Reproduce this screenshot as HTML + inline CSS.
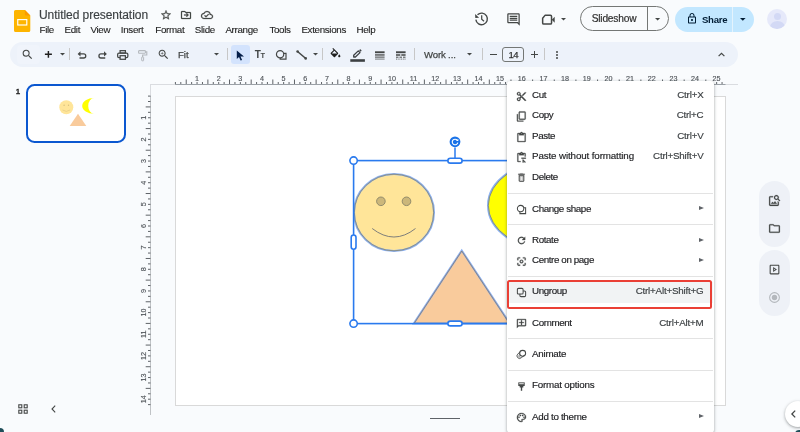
<!DOCTYPE html>
<html><head><meta charset="utf-8"><title>Untitled presentation</title>
<style>
html,body{margin:0;padding:0}
body{width:800px;height:432px;overflow:hidden;will-change:transform;background:#f9fbfd;position:relative;font-family:"Liberation Sans",sans-serif;color:#1f1f1f}
.a{position:absolute}
.t{position:absolute;white-space:nowrap;line-height:1}
svg{position:absolute;overflow:visible}
#title{left:39px;top:8.800px;font-size:12px;letter-spacing:-0.050px;color:#3c4043;-webkit-text-stroke:0.150px #3c4043}
.m{font-size:9.800px;top:25.300px;letter-spacing:-0.330px;color:#1f1f1f;-webkit-text-stroke:0.120px #1f1f1f}
#tb{left:10px;top:41.500px;width:728px;height:25.200px;border-radius:12.600px;background:#edf2fa}
.sep{position:absolute;width:1px;background:#c7c7c7;top:48px;height:12px}
.tbt{font-size:9.600px;top:50.200px;color:#444746;letter-spacing:0;-webkit-text-stroke:0.250px #444746}
#menu{left:507px;top:81px;width:206.500px;height:352px;background:#fff;border-radius:3.500px;box-shadow:0 1px 3px 1px rgba(60,64,67,.18),0 1px 2px rgba(60,64,67,.3)}
.mi{position:absolute;left:24px;font-size:9.800px;color:#202124;white-space:nowrap;line-height:1;letter-spacing:-0.400px;-webkit-text-stroke:0.150px #202124}
.mk{position:absolute;right:9.500px;font-size:9.800px;color:#3c4043;-webkit-text-stroke:0.150px #3c4043;white-space:nowrap;line-height:1;letter-spacing:-0.200px}
.ms{position:absolute;left:0;right:0;height:1px;background:#e3e3e3}
.arr{position:absolute;right:9.300px;width:0;height:0;border-left:5px solid #5f6368;border-top:2.800px solid transparent;border-bottom:2.800px solid transparent}
.rt text{font-size:7.200px;fill:#50555a;stroke:#50555a;stroke-width:0.150px;font-family:"Liberation Sans",sans-serif}
</style></head><body>
<!-- header -->
<svg style="left:13.600px;top:10px" width="16.300" height="22" viewBox="0 0 16.300 22"><path d="M1.600 0h9.300L16.300 5.400v15a1.600 1.600 0 0 1-1.600 1.600H1.600A1.600 1.600 0 0 1 0 20.400V1.600A1.600 1.600 0 0 1 1.600 0z" fill="#fdb400"/><path d="M10.900 0L16.300 5.400h-4.200a1.200 1.200 0 0 1-1.200-1.200z" fill="#fb9a00"/><rect x="3.750" y="9.600" width="9.050" height="5.400" fill="none" stroke="#fff" stroke-width="1.150"/></svg>
<div class="t" id="title">Untitled presentation</div>
<div class="t m" style="left:39.500px">File</div>
<div class="t m" style="left:64.500px">Edit</div>
<div class="t m" style="left:90.500px">View</div>
<div class="t m" style="left:120.800px">Insert</div>
<div class="t m" style="left:155.300px">Format</div>
<div class="t m" style="left:194.800px">Slide</div>
<div class="t m" style="left:225.400px">Arrange</div>
<div class="t m" style="left:269.400px">Tools</div>
<div class="t m" style="left:301.400px">Extensions</div>
<div class="t m" style="left:356.500px">Help</div>
<!-- title icons: star, move, cloud -->
<svg style="left:159.600px;top:9.100px" width="12" height="12" viewBox="0 0 24 24" stroke="#444746" stroke-width="0.500"><path d="M22 9.240l-7.190-.62L12 2 9.190 8.630 2 9.240l5.460 4.730L5.820 21 12 17.270 18.180 21l-1.630-7.030L22 9.240zM12 15.400l-3.760 2.270 1-4.280-3.320-2.880 4.380-.38L12 6.100l1.710 4.040 4.380.38-3.320 2.880 1 4.280L12 15.400z" fill="#444746"/></svg>
<svg style="left:180px;top:9px" width="12" height="12" viewBox="0 0 24 24" stroke="#444746" stroke-width="0.500"><path d="M20 6h-8l-2-2H4c-1.100 0-2 .9-2 2v12c0 1.100.9 2 2 2h16c1.100 0 2-.9 2-2V8c0-1.100-.9-2-2-2zm0 12H4V6h5.170l2 2H20v10zm-7.840-3.590L13.570 16l4-4-4-4-1.410 1.410L13.740 11H8v2h5.740l-1.580 1.410z" fill="#444746"/></svg>
<svg style="left:200.600px;top:9px" width="12" height="12" viewBox="0 0 24 24" stroke="#444746" stroke-width="0.500"><path d="M19.350 10.040A7.490 7.490 0 0 0 12 4C9.110 4 6.600 5.640 5.350 8.040A5.994 5.994 0 0 0 0 14c0 3.310 2.690 6 6 6h13c2.760 0 5-2.240 5-5 0-2.640-2.050-4.780-4.650-4.960zM19 18H6c-2.210 0-4-1.790-4-4s1.790-4 4-4h.71C7.370 7.690 9.480 6 12 6c3.040 0 5.500 2.460 5.500 5.500v.5H19c1.660 0 3 1.340 3 3s-1.340 3-3 3zm-9-3.820l-2.090-2.090L6.500 13.500 10 17l6.010-6.010-1.410-1.410z" fill="#444746"/></svg>
<!-- right header -->
<svg style="left:0;top:0" width="800" height="40" viewBox="0 0 800 40"><path d="M477.500 14.800A5.800 5.800 0 1 1 475.850 19.600" fill="none" stroke="#444746" stroke-width="1.350"/><path d="M475.100 14.100L475.300 18.100L479.100 17.700Z" fill="#444746"/><path d="M481.700 15.300V19.300L484 21.300" fill="none" stroke="#444746" stroke-width="1.250"/></svg>
<svg style="left:506px;top:12px" width="15" height="15" viewBox="0 0 24 24"><path d="M21.990 4c0-1.100-.89-2-1.990-2H4c-1.100 0-2 .9-2 2v12c0 1.100.9 2 2 2h14l4 4-.01-18zM20 4v13.170L18.830 16H4V4h16zM6 12h12v2H6zm0-3h12v2H6zm0-3h12v2H6z" fill="#444746"/></svg>
<svg style="left:0;top:0" width="800" height="40" viewBox="0 0 800 40"><path d="M545 15.350H550.450A1.100 1.100 0 0 1 551.550 16.450V22.950A1.100 1.100 0 0 1 550.450 24.050H543.750A1.100 1.100 0 0 1 542.650 22.950V18.300Z" fill="none" stroke="#444746" stroke-width="1.500" stroke-linejoin="round"/><path d="M551.800 19.700L554.700 16.700V22.800Z" fill="#444746"/></svg>
<svg style="left:561px;top:17.900px" width="5" height="2.600" viewBox="0 0 10 5"><path d="M0 0l5 5 5-5z" fill="#444746"/></svg>
<div class="a" style="left:580.400px;top:6.400px;width:87px;height:23px;border:1px solid #747775;border-radius:13px"></div>
<div class="a" style="left:646.500px;top:7px;width:1px;height:24px;background:#747775"></div>
<div class="t" style="left:591.700px;top:14.100px;font-size:10.200px;letter-spacing:-0.200px;color:#303030;-webkit-text-stroke:0.200px #303030">Slideshow</div>
<svg style="left:654.700px;top:17.600px" width="5.200" height="2.600" viewBox="0 0 10 5"><path d="M0 0l5 5 5-5z" fill="#444746"/></svg>
<div class="a" style="left:674.500px;top:6.500px;width:79.500px;height:25.500px;border-radius:13px;background:#c2e7ff"></div>
<div class="a" style="left:732px;top:6.500px;width:1px;height:25.500px;background:#e4f3fd"></div>
<svg style="left:685.500px;top:12px" width="12" height="13" viewBox="0 0 24 24"><path d="M18 8h-1V6c0-2.760-2.240-5-5-5S7 3.240 7 6v2H6c-1.100 0-2 .9-2 2v10c0 1.100.9 2 2 2h12c1.100 0 2-.9 2-2V10c0-1.100-.9-2-2-2zM9 6c0-1.660 1.340-3 3-3s3 1.340 3 3v2H9V6zm9 14H6V10h12v10zm-6-3c1.100 0 2-.9 2-2s-.9-2-2-2-2 .9-2 2 .9 2 2 2z" fill="#001d35"/></svg>
<div class="t" style="left:702px;top:14.800px;font-size:9.600px;font-weight:bold;letter-spacing:-0.300px;color:#001d35">Share</div>
<svg style="left:740.200px;top:17.700px" width="5.600" height="2.800" viewBox="0 0 10 5"><path d="M0 0l5 5 5-5z" fill="#001d35"/></svg>
<div class="a" style="left:767px;top:9px;width:20px;height:20px;border-radius:10px;background:#e6e9fa;overflow:hidden"><div class="a" style="left:6.500px;top:3.500px;width:7px;height:7px;border-radius:50%;background:#d3d9f5"></div><div class="a" style="left:2.500px;top:12px;width:15px;height:12px;border-radius:50%;background:#d3d9f5"></div></div>
<!-- toolbar -->
<div class="a" id="tb"></div>
<div class="a" style="left:16.500px;top:45px;width:23.200px;height:18.500px;border-radius:4px;background:#f0f4fb"></div>
<div class="a" style="left:230.500px;top:45px;width:19px;height:19px;border-radius:3px;background:#d3e3fd"></div>
<div class="sep" style="left:69px"></div>
<div class="sep" style="left:227px"></div>
<div class="sep" style="left:322px"></div>
<div class="sep" style="left:414px"></div>
<div class="sep" style="left:482px"></div>
<div class="sep" style="left:544px"></div>
<!-- search -->
<svg style="left:21px;top:47.500px" width="13" height="13" viewBox="0 0 24 24"><path d="M15.500 14h-.79l-.28-.27A6.471 6.471 0 0 0 16 9.500 6.500 6.500 0 1 0 9.500 16c1.610 0 3.090-.59 4.230-1.570l.27.28v.79l5 4.990L20.490 19l-4.990-5zm-6 0C7.010 14 5 11.990 5 9.500S7.010 5 9.500 5 14 7.010 14 9.500 11.990 14 9.500 14z" fill="#444746"/></svg>
<!-- plus -->
<svg style="left:44px;top:50px" width="9" height="9" viewBox="0 0 9 9"><path d="M0.900 4.300H7.900M4.400 0.900V7.700" fill="none" stroke="#1f1f1f" stroke-width="1.450"/></svg>
<svg style="left:60.1px;top:53.300px" width="5" height="2.600" viewBox="0 0 10 5"><path d="M0 0l5 5 5-5z" fill="#444746"/></svg>
<!-- undo -->
<svg style="left:77px;top:51px" width="10" height="9" viewBox="0 0 10 9"><path d="M2 2.900H6.700A2.050 2.050 0 0 1 6.700 7H2.500" fill="none" stroke="#444746" stroke-width="1.300"/><path d="M0.600 2.900L3.500 0.300V5.500Z" fill="#444746"/></svg>
<!-- redo -->
<svg style="left:97.500px;top:51px" width="10" height="9" viewBox="0 0 10 9"><path d="M7.500 2.900H3A2.050 2.050 0 0 0 3 7H7.250" fill="none" stroke="#444746" stroke-width="1.300"/><path d="M8.900 2.900L6 0.300V5.500Z" fill="#444746"/></svg>
<!-- print -->
<svg style="left:117px;top:49.500px" width="11.500" height="10" viewBox="0 0 11.500 10"><rect x="0.650" y="3.100" width="10.200" height="4.400" rx="1.300" fill="none" stroke="#444746" stroke-width="1.250"/><rect x="3.100" y="0.650" width="5.300" height="2.400" fill="none" stroke="#444746" stroke-width="1.250"/><rect x="3.100" y="5.700" width="5.300" height="3.600" fill="#edf2fa" stroke="#444746" stroke-width="1.250"/></svg>
<!-- paint format (disabled) -->
<svg style="left:138px;top:49.500px" width="9.500" height="11.500" viewBox="0 0 9.500 11.500"><rect x="0.600" y="0.600" width="6.800" height="2.600" rx="0.600" fill="none" stroke="#b4b8bd" stroke-width="1.100"/><path d="M7.400 1.900H8.800V5H4.600V7" fill="none" stroke="#b4b8bd" stroke-width="1.100"/><rect x="3.700" y="7" width="1.900" height="3.800" rx="0.400" fill="none" stroke="#b4b8bd" stroke-width="1"/></svg>
<!-- zoom -->
<svg style="left:157px;top:48px" width="13" height="13" viewBox="0 0 24 24"><path d="M15.500 14h-.79l-.28-.27C15.410 12.590 16 11.110 16 9.500 16 5.910 13.090 3 9.500 3S3 5.910 3 9.500 5.910 16 9.500 16c1.610 0 3.090-.59 4.230-1.570l.27.28v.79l5 4.990L20.490 19l-4.990-5zm-6 0C7.010 14 5 11.990 5 9.500S7.010 5 9.500 5 14 7.010 14 9.500 11.990 14 9.500 14zm2.500-4h-2v2H9v-2H7V9h2V7h1v2h2v1z" fill="#444746"/></svg>
<div class="t tbt" style="left:178px">Fit</div>
<svg style="left:213.6px;top:53.300px" width="5" height="2.600" viewBox="0 0 10 5"><path d="M0 0l5 5 5-5z" fill="#444746"/></svg>
<!-- cursor -->
<svg style="left:235.500px;top:49.500px" width="9" height="11" viewBox="0 0 9 11"><path d="M0.800 0.400L8 6.500H4.500L6.100 9.900L4.600 10.600L3 7.100L0.800 9Z" fill="#041e49"/></svg>
<!-- Tt -->
<div class="t" style="left:254.800px;top:50.400px;font-size:10px;font-weight:bold;color:#444746;letter-spacing:-0.500px">T<span style="font-size:7.500px">T</span></div>
<!-- shape -->
<svg style="left:275px;top:48.500px" width="12" height="11.500" viewBox="0 0 12 11.500"><path d="M8.800 4.300H11V10.200H5.200V8.700" fill="none" stroke="#444746" stroke-width="1.200"/><circle cx="5.100" cy="5.200" r="3.650" fill="#edf2fa" stroke="#444746" stroke-width="1.200"/></svg>
<!-- line -->
<svg style="left:296px;top:49.500px" width="11" height="10" viewBox="0 0 11 10"><path d="M1.500 1.500L9.800 8.500" stroke="#444746" stroke-width="1.500" fill="none"/><circle cx="1.600" cy="1.500" r="1.300" fill="#444746"/><circle cx="9.700" cy="8.400" r="1.300" fill="#444746"/></svg>
<svg style="left:313.1px;top:53.300px" width="5" height="2.600" viewBox="0 0 10 5"><path d="M0 0l5 5 5-5z" fill="#444746"/></svg>
<!-- fill -->
<svg style="left:329px;top:47.500px" width="13" height="13" viewBox="0 0 24 24"><path d="M16.560 8.940L7.620 0 6.210 1.410l2.380 2.380-5.150 5.150a1.490 1.490 0 0 0 0 2.120l5.500 5.500c.29.290.68.440 1.060.440s.77-.15 1.060-.44l5.500-5.500c.59-.58.590-1.530 0-2.120zM5.210 10L10 5.210 14.790 10H5.210zM19 11.500s-2 2.170-2 3.500c0 1.100.9 2 2 2s2-.9 2-2c0-1.330-2-3.500-2-3.500z" fill="#1f1f1f"/></svg>
<!-- pen -->
<svg style="left:350px;top:49px" width="15.500" height="13" viewBox="0 0 15.500 13"><path d="M3.700 8V6.300L8.300 1.900L10 3.600L5.400 8Z" fill="none" stroke="#3c4043" stroke-width="1.300" stroke-linejoin="round"/><path d="M9.100 1.300L9.900 0.500Q10.300 0.200 10.700 0.500L11.400 1.200Q11.700 1.600 11.400 2L10.600 2.800Z" fill="#3c4043"/><rect x="0.300" y="10.200" width="14.600" height="2.600" fill="#3c4043"/></svg>
<!-- line weight -->
<svg style="left:374.500px;top:50.500px" width="10" height="9" viewBox="0 0 10 9"><rect x="0" y="0.300" width="9.600" height="1.900" fill="#444746"/><rect x="0" y="3.300" width="9.600" height="1.300" fill="#444746"/><rect x="0" y="5.600" width="9.600" height="1" fill="#444746"/><rect x="0" y="7.700" width="9.600" height="0.700" fill="#444746"/></svg>
<!-- line dash -->
<svg style="left:396px;top:50.500px" width="10" height="9" viewBox="0 0 10 9"><rect x="0" y="0.300" width="9.600" height="1.900" fill="#444746"/><path d="M0 4h9.600" stroke="#444746" stroke-width="1.300" stroke-dasharray="4.300 1" fill="none"/><path d="M0 6.200h9.600" stroke="#444746" stroke-width="1" stroke-dasharray="2.500 1" fill="none"/><path d="M0 8.100h9.600" stroke="#444746" stroke-width="0.800" stroke-dasharray="1 0.700" fill="none"/></svg>
<div class="t tbt" style="left:424px;letter-spacing:-0.150px">Work ...</div>
<svg style="left:466.6px;top:53.300px" width="5" height="2.600" viewBox="0 0 10 5"><path d="M0 0l5 5 5-5z" fill="#444746"/></svg>
<!-- minus / size / plus -->
<div class="a" style="left:490.300px;top:53.600px;width:6.600px;height:1.300px;background:#444746"></div>
<div class="a" style="left:502px;top:46.500px;width:19.500px;height:13px;border:1px solid #747775;border-radius:3px"></div>
<div class="t tbt" style="left:508.600px;color:#1f1f1f;letter-spacing:-0.600px">14</div>
<div class="a" style="left:531.100px;top:53.600px;width:6.800px;height:1.300px;background:#444746"></div>
<div class="a" style="left:533.850px;top:50.850px;width:1.300px;height:6.800px;background:#444746"></div>
<!-- dots -->
<div class="a" style="left:555.900px;top:50.600px;width:2.200px;height:2.200px;border-radius:50%;background:#444746"></div>
<div class="a" style="left:555.900px;top:53.700px;width:2.200px;height:2.200px;border-radius:50%;background:#444746"></div>
<div class="a" style="left:555.900px;top:56.800px;width:2.200px;height:2.200px;border-radius:50%;background:#444746"></div>
<!-- chevron up -->
<svg style="left:717.500px;top:52px" width="7" height="5" viewBox="0 0 7 5"><path d="M0.600 4.200L3.500 1.300L6.400 4.200" fill="none" stroke="#444746" stroke-width="1.200"/></svg>

<!-- filmstrip -->
<div class="t" style="left:15.800px;top:88.200px;font-size:8px;color:#1f1f1f;-webkit-text-stroke:0.450px #1f1f1f">1</div>
<div class="a" style="left:26px;top:83.800px;width:95.800px;height:54.900px;border:2px solid #0b57d0;border-radius:8.500px;background:#fff"></div>
<svg style="left:0;top:0" width="140" height="150" viewBox="0 0 140 150"><circle cx="66.300" cy="107.200" r="7" fill="#ffe599"/><circle cx="64.100" cy="105.200" r="0.700" fill="#d6bf7c"/><circle cx="68.500" cy="105.200" r="0.700" fill="#d6bf7c"/><path d="M62.500 110Q66.300 112.800 70.100 110" stroke="#d6bf7c" stroke-width="0.500" fill="none"/><path d="M94.200 98A12 7.900 0 0 0 94.200 113.800A6 7.900 0 0 1 94.200 98Z" fill="#ffff00"/><path d="M78 113.800L86.300 126H69.700Z" fill="#f9cb9c"/></svg>

<!-- canvas -->
<div class="a" style="left:150px;top:84px;width:588px;height:1px;background:#dadce0"></div>
<div class="a" style="left:150px;top:84px;width:1px;height:12px;background:#dadce0"></div>
<div class="a" style="left:175px;top:95.500px;width:551px;height:310.500px;background:#fff;border:1px solid #d9d9d9;box-sizing:border-box"></div>
<svg class="rt" style="left:0;top:0" width="800" height="432" viewBox="0 0 800 432">
<path d="M175 84.500H725.500" stroke="#9aa0a6" stroke-width="1" fill="none"/>
<path d="M175.40 84V82M180.81 84V82M186.22 84V79.500M191.64 84V82M197.05 84V82M202.46 84V82M207.88 84V79.500M213.29 84V82M218.70 84V82M224.11 84V82M229.53 84V79.500M234.94 84V82M240.35 84V82M245.76 84V82M251.18 84V79.500M256.59 84V82M262.00 84V82M267.41 84V82M272.82 84V79.500M278.24 84V82M283.65 84V82M289.06 84V82M294.48 84V79.500M299.89 84V82M305.30 84V82M310.71 84V82M316.12 84V79.500M321.54 84V82M326.95 84V82M332.36 84V82M337.77 84V79.500M343.19 84V82M348.60 84V82M354.01 84V82M359.42 84V79.500M364.84 84V82M370.25 84V82M375.66 84V82M381.07 84V79.500M386.49 84V82M391.90 84V82M397.31 84V82M402.73 84V79.500M408.14 84V82M413.55 84V82M418.96 84V82M424.38 84V79.500M429.79 84V82M435.20 84V82M440.61 84V82M446.02 84V79.500M451.44 84V82M456.85 84V82M462.26 84V82M467.67 84V79.500M473.09 84V82M478.50 84V82M483.91 84V82M489.32 84V79.500M494.74 84V82M500.15 84V82M505.56 84V82M510.98 84V79.500M516.39 84V82M521.80 84V82M527.21 84V82M532.62 84V79.500M538.04 84V82M543.45 84V82M548.86 84V82M554.27 84V79.500M559.69 84V82M565.10 84V82M570.51 84V82M575.92 84V79.500M581.34 84V82M586.75 84V82M592.16 84V82M597.57 84V79.500M602.99 84V82M608.40 84V82M613.81 84V82M619.23 84V79.500M624.64 84V82M630.05 84V82M635.46 84V82M640.88 84V79.500M646.29 84V82M651.70 84V82M657.11 84V82M662.52 84V79.500M667.94 84V82M673.35 84V82M678.76 84V82M684.17 84V79.500M689.59 84V82M695.00 84V82M700.41 84V82M705.82 84V79.500M711.24 84V82M716.65 84V82M722.06 84V82" stroke="#5f6368" stroke-width="1" fill="none"/>
<text x="197.1" y="80.700" text-anchor="middle">1</text>
<text x="218.7" y="80.700" text-anchor="middle">2</text>
<text x="240.3" y="80.700" text-anchor="middle">3</text>
<text x="262.0" y="80.700" text-anchor="middle">4</text>
<text x="283.6" y="80.700" text-anchor="middle">5</text>
<text x="305.3" y="80.700" text-anchor="middle">6</text>
<text x="326.9" y="80.700" text-anchor="middle">7</text>
<text x="348.6" y="80.700" text-anchor="middle">8</text>
<text x="370.2" y="80.700" text-anchor="middle">9</text>
<text x="391.9" y="80.700" text-anchor="middle">10</text>
<text x="413.5" y="80.700" text-anchor="middle">11</text>
<text x="435.2" y="80.700" text-anchor="middle">12</text>
<text x="456.9" y="80.700" text-anchor="middle">13</text>
<text x="478.5" y="80.700" text-anchor="middle">14</text>
<text x="500.1" y="80.700" text-anchor="middle">15</text>
<text x="521.8" y="80.700" text-anchor="middle">16</text>
<text x="543.4" y="80.700" text-anchor="middle">17</text>
<text x="565.1" y="80.700" text-anchor="middle">18</text>
<text x="586.8" y="80.700" text-anchor="middle">19</text>
<text x="608.4" y="80.700" text-anchor="middle">20</text>
<text x="630.0" y="80.700" text-anchor="middle">21</text>
<text x="651.7" y="80.700" text-anchor="middle">22</text>
<text x="673.4" y="80.700" text-anchor="middle">23</text>
<text x="695.0" y="80.700" text-anchor="middle">24</text>
<text x="716.6" y="80.700" text-anchor="middle">25</text>
<path d="M150.500 96V415" stroke="#c0c3c6" stroke-width="1" fill="none"/>
<path d="M150.500 96.10H148M150.500 101.51H148M150.500 106.92H145.700M150.500 112.34H148M150.500 117.75H148M150.500 123.16H148M150.500 128.57H145.700M150.500 133.99H148M150.500 139.40H148M150.500 144.81H148M150.500 150.22H145.700M150.500 155.64H148M150.500 161.05H148M150.500 166.46H148M150.500 171.88H145.700M150.500 177.29H148M150.500 182.70H148M150.500 188.11H148M150.500 193.52H145.700M150.500 198.94H148M150.500 204.35H148M150.500 209.76H148M150.500 215.17H145.700M150.500 220.59H148M150.500 226.00H148M150.500 231.41H148M150.500 236.82H145.700M150.500 242.24H148M150.500 247.65H148M150.500 253.06H148M150.500 258.48H145.700M150.500 263.89H148M150.500 269.30H148M150.500 274.71H148M150.500 280.12H145.700M150.500 285.54H148M150.500 290.95H148M150.500 296.36H148M150.500 301.77H145.700M150.500 307.19H148M150.500 312.60H148M150.500 318.01H148M150.500 323.42H145.700M150.500 328.84H148M150.500 334.25H148M150.500 339.66H148M150.500 345.07H145.700M150.500 350.49H148M150.500 355.90H148M150.500 361.31H148M150.500 366.73H145.700M150.500 372.14H148M150.500 377.55H148M150.500 382.96H148M150.500 388.38H145.700M150.500 393.79H148M150.500 399.20H148M150.500 404.61H148" stroke="#5f6368" stroke-width="1" fill="none"/>
<text transform="translate(146.300 117.8) rotate(-90)" text-anchor="middle">1</text>
<text transform="translate(146.300 139.4) rotate(-90)" text-anchor="middle">2</text>
<text transform="translate(146.300 161.0) rotate(-90)" text-anchor="middle">3</text>
<text transform="translate(146.300 182.7) rotate(-90)" text-anchor="middle">4</text>
<text transform="translate(146.300 204.3) rotate(-90)" text-anchor="middle">5</text>
<text transform="translate(146.300 226.0) rotate(-90)" text-anchor="middle">6</text>
<text transform="translate(146.300 247.6) rotate(-90)" text-anchor="middle">7</text>
<text transform="translate(146.300 269.3) rotate(-90)" text-anchor="middle">8</text>
<text transform="translate(146.300 290.9) rotate(-90)" text-anchor="middle">9</text>
<text transform="translate(146.300 312.6) rotate(-90)" text-anchor="middle">10</text>
<text transform="translate(146.300 334.2) rotate(-90)" text-anchor="middle">11</text>
<text transform="translate(146.300 355.9) rotate(-90)" text-anchor="middle">12</text>
<text transform="translate(146.300 377.5) rotate(-90)" text-anchor="middle">13</text>
<text transform="translate(146.300 399.2) rotate(-90)" text-anchor="middle">14</text>
</svg>
<div class="a" style="left:430px;top:417.500px;width:30px;height:1px;background:#5f6368"></div>
<!-- bottom-left icons -->
<svg style="left:18px;top:404px" width="10" height="10" viewBox="0 0 10 10"><g fill="none" stroke="#444746" stroke-width="1.100"><rect x="0.800" y="0.800" width="3" height="3"/><rect x="6.200" y="0.800" width="3" height="3"/><rect x="0.800" y="6.200" width="3" height="3"/><rect x="6.200" y="6.200" width="3" height="3"/></g></svg>
<svg style="left:51px;top:405px" width="5" height="8" viewBox="0 0 5 8"><path d="M4.200 0.700L1 4L4.200 7.300" fill="none" stroke="#444746" stroke-width="1.100"/></svg>
<!-- shapes on slide -->
<svg style="left:0;top:0" width="800" height="432" viewBox="0 0 800 432">
<ellipse cx="394" cy="212.500" rx="40" ry="38.600" fill="#ffe599" stroke="#8ab0f2" stroke-width="2"/><ellipse cx="394" cy="212.500" rx="39.700" ry="38.300" fill="none" stroke="#8b8668" stroke-width="0.800"/>
<circle cx="380.900" cy="201.300" r="4.300" fill="#ccb77a" stroke="#8a8468" stroke-width="0.900"/>
<circle cx="406.500" cy="201.300" r="4.300" fill="#ccb77a" stroke="#8a8468" stroke-width="0.900"/>
<path d="M372.200 228.500Q394 245.500 415.500 228.500" fill="none" stroke="#6f7377" stroke-width="0.900"/>
<ellipse cx="553" cy="205.500" rx="65" ry="45" fill="#ffff00" stroke="#8ab0f2" stroke-width="2"/><ellipse cx="553" cy="205.500" rx="64.700" ry="44.700" fill="none" stroke="#8b8b55" stroke-width="0.800"/>
<path d="M461.750 250.500L509.750 323.500H413.750Z" fill="#f9cb9c" stroke="#8ab0f2" stroke-width="2"/><path d="M461.750 251L509.250 323.200H414.250Z" fill="none" stroke="#8b7a66" stroke-width="0.800"/>
<!-- selection -->
<rect x="353.600" y="160.600" width="203" height="163" fill="none" stroke="#2a7aee" stroke-width="1.600"/>
<path d="M455 147.500V158.300" stroke="#2a7aee" stroke-width="1.500"/>
<circle cx="455" cy="141.800" r="5.400" fill="#1a73e8"/>
<path d="M457.300 140.300A2.800 2.800 0 1 0 457.800 142.600" fill="none" stroke="#fff" stroke-width="1.100"/>
<path d="M458.300 138.800V141H456.100Z" fill="#fff"/>
<rect x="447.900" y="158.300" width="14.200" height="4.800" rx="2.400" fill="#fff" stroke="#2a7aee" stroke-width="1.600"/>
<rect x="447.900" y="321.100" width="14.200" height="4.800" rx="2.400" fill="#fff" stroke="#2a7aee" stroke-width="1.600"/>
<rect x="351.200" y="235" width="4.800" height="14.200" rx="2.400" fill="#fff" stroke="#2a7aee" stroke-width="1.600"/>
<circle cx="353.600" cy="160.600" r="3.700" fill="#fff" stroke="#2a7aee" stroke-width="1.600"/>
<circle cx="353.600" cy="323.600" r="3.700" fill="#fff" stroke="#2a7aee" stroke-width="1.600"/>
</svg>

<!-- context menu -->
<div class="a" id="menu"><div class="a" style="left:1px;top:3px;width:205px;height:349px">
<div class="a" style="left:0;top:198px;width:205px;height:20.500px;background:#f1f3f4"></div>
<svg style="left:7.80px;top:6.75px" width="11" height="11" viewBox="0 0 24 24" fill="#444746" stroke="#444746" stroke-width="0.600"><path transform="rotate(0 12 12)" d="M9.640 7.640c.23-.5.360-1.050.360-1.640 0-2.210-1.790-4-4-4S2 3.790 2 6s1.790 4 4 4c.59 0 1.140-.13 1.640-.36L10 12l-2.360 2.360C7.140 14.130 6.590 14 6 14c-2.210 0-4 1.790-4 4s1.790 4 4 4 4-1.790 4-4c0-.59-.13-1.140-.36-1.640L12 14l7 7h3v-1L9.640 7.640zM6 8c-1.100 0-2-.89-2-2s.9-2 2-2 2 .89 2 2-.9 2-2 2zm0 12c-1.100 0-2-.89-2-2s.9-2 2-2 2 .89 2 2-.9 2-2 2zm6-7.500c-.28 0-.5-.22-.5-.5s.22-.5.500-.5.500.22.500.5-.22.500-.5.500zM19 3l-6 6 2 2 7-7V3h-3z"/></svg>
<div class="mi" style="top:6.1px">Cut</div>
<div class="mk" style="top:6.1px">Ctrl+X</div>
<svg style="left:7.80px;top:27.15px" width="11" height="11" viewBox="0 0 24 24" fill="#444746" stroke="#444746" stroke-width="0.600"><path transform="translate(0 24) scale(1 -1)" d="M16 1H4c-1.100 0-2 .9-2 2v14h2V3h12V1zm3 4H8c-1.100 0-2 .9-2 2v14c0 1.100.9 2 2 2h11c1.100 0 2-.9 2-2V7c0-1.100-.9-2-2-2zm0 16H8V7h11v14z"/></svg>
<div class="mi" style="top:26.1px">Copy</div>
<div class="mk" style="top:26.1px">Ctrl+C</div>
<svg style="left:7.80px;top:47.55px" width="11" height="11" viewBox="0 0 24 24" fill="#444746" stroke="#444746" stroke-width="0.600"><path d="M19 2h-4.180C14.400.84 13.300 0 12 0c-1.300 0-2.400.84-2.820 2H5c-1.100 0-2 .9-2 2v16c0 1.100.9 2 2 2h14c1.100 0 2-.9 2-2V4c0-1.100-.9-2-2-2zm-7 0c.55 0 1 .45 1 1s-.45 1-1 1-1-.45-1-1 .45-1 1-1zm7 18H5V4h2v3h10V4h2v16z"/></svg>
<div class="mi" style="top:47.1px">Paste</div>
<div class="mk" style="top:47.1px">Ctrl+V</div>
<svg style="left:7.80px;top:67.85px" width="11" height="11" viewBox="0 0 24 24" fill="#444746" stroke="#444746" stroke-width="0.600"><path d="M19 2h-4.180C14.400.84 13.300 0 12 0c-1.300 0-2.400.84-2.820 2H5c-1.100 0-2 .9-2 2v16c0 1.100.9 2 2 2h5v-2H5V4h2v3h10V4h2v6h2V4c0-1.100-.9-2-2-2zm-7 2c-.55 0-1-.45-1-1s.45-1 1-1 1 .45 1 1-.45 1-1 1z"/><path d="M12 12.500h9.500v2H12zM15.500 16.500L21 22l-1.400 1.400-3.100-3.100V23h-2v-6.500z"/></svg>
<div class="mi" style="top:67.1px;letter-spacing:-0.130px">Paste without formatting</div>
<div class="mk" style="top:67.1px">Ctrl+Shift+V</div>
<svg style="left:7.80px;top:88.35px" width="11" height="11" viewBox="0 0 24 24" fill="#444746" stroke="#444746" stroke-width="0.600"><path d="M16 9v10H8V9h8m-1.500-6h-5l-1 1H5v2h14V4h-3.500l-1-1zM18 7H6v12c0 1.100.9 2 2 2h8c1.100 0 2-.9 2-2V7z" stroke-width="0.300"/><path d="M10.100 10.500h1v7h-1zM12.900 10.500h1v7h-1z" stroke="none" fill="#777"/></svg>
<div class="mi" style="top:88.1px">Delete</div>
<svg style="left:7.80px;top:119.75px" width="11" height="11" viewBox="0 0 24 24" fill="#444746"><path d="M17.500 8H21v13H8.500v-3.500" fill="none" stroke="#444746" stroke-width="2.200"/><circle cx="10" cy="10" r="7" fill="#fff" stroke="#444746" stroke-width="2.200"/></svg>
<div class="mi" style="top:120.1px">Change shape</div>
<div class="arr" style="top:122.2px"></div>
<svg style="left:7.80px;top:151.15px" width="11" height="11" viewBox="0 0 24 24" fill="#444746" stroke="#444746" stroke-width="0.600"><path d="M17.650 6.350A7.958 7.958 0 0 0 12 4c-4.420 0-7.990 3.580-7.990 8s3.570 8 7.990 8c3.730 0 6.840-2.550 7.730-6h-2.080A5.990 5.990 0 0 1 12 18c-3.310 0-6-2.690-6-6s2.690-6 6-6c1.660 0 3.140.69 4.220 1.780L13 11h7V4l-2.350 2.350z"/></svg>
<div class="mi" style="top:151.1px">Rotate</div>
<div class="arr" style="top:153.6px"></div>
<svg style="left:7.80px;top:171.55px" width="11" height="11" viewBox="0 0 24 24" fill="#444746" stroke="#444746" stroke-width="0.600"><path d="M5 15H3v4c0 1.100.9 2 2 2h4v-2H5v-4zM5 5h4V3H5c-1.100 0-2 .9-2 2v4h2V5zm14-2h-4v2h4v4h2V5c0-1.100-.9-2-2-2zm0 16h-4v2h4c1.100 0 2-.9 2-2v-4h-2v4zM12 8c-2.210 0-4 1.790-4 4s1.790 4 4 4 4-1.790 4-4-1.790-4-4-4zm0 6c-1.100 0-2-.9-2-2s.9-2 2-2 2 .9 2 2-.9 2-2 2z"/></svg>
<div class="mi" style="top:171.1px">Centre on page</div>
<div class="arr" style="top:174.0px"></div>
<svg style="left:7.80px;top:202.85px" width="11" height="11" viewBox="0 0 24 24" fill="#444746"><rect x="8.500" y="8.500" width="12.500" height="12.500" rx="2.500" fill="none" stroke="#444746" stroke-width="2.200"/><rect x="3" y="3" width="12.500" height="12.500" rx="2.500" fill="#f1f3f4" stroke="#444746" stroke-width="2.200"/></svg>
<div class="mi" style="top:202.1px">Ungroup</div>
<div class="mk" style="top:202.1px">Ctrl+Alt+Shift+G</div>
<svg style="left:7.80px;top:234.05px" width="11" height="11" viewBox="0 0 24 24" fill="#444746" stroke="#444746" stroke-width="0.600"><g transform="translate(24 0) scale(-1 1)"><path d="M22 4c0-1.100-.9-2-2-2H4c-1.100 0-2 .9-2 2v12c0 1.100.9 2 2 2h14l4 4V4zm-2 13.170L18.830 16H4V4h16v13.170zM13 5h-2v4H7v2h4v4h2v-4h4V9h-4z"/></g></svg>
<div class="mi" style="top:234.1px">Comment</div>
<div class="mk" style="top:234.1px">Ctrl+Alt+M</div>
<svg style="left:7.80px;top:265.35px" width="11" height="11" viewBox="0 0 24 24" fill="#444746"><circle cx="14.500" cy="9.500" r="6.500" fill="none" stroke="#444746" stroke-width="2.200"/><path d="M9.500 5.500L3.800 11.200A5.500 5.500 0 0 0 3.800 19A5.500 5.500 0 0 0 11.600 19L18.500 13.800" fill="none" stroke="#444746" stroke-width="2"/><path d="M9 11.500L6.300 14.200A3 3 0 0 0 9.800 18" fill="none" stroke="#444746" stroke-width="1.600"/></svg>
<div class="mi" style="top:265.1px;letter-spacing:-0.250px">Animate</div>
<svg style="left:7.80px;top:296.55px" width="11" height="11" viewBox="0 0 24 24" fill="#444746"><path d="M5 3h14v8H5z"/><path d="M8 11h8v3h-2.500v7.500h-3V14H8z"/><path d="M7 5h10v2H7z" fill="#fff"/></svg>
<div class="mi" style="top:296.1px;letter-spacing:-0.200px">Format options</div>
<svg style="left:7.80px;top:327.75px" width="11" height="11" viewBox="0 0 24 24" fill="#444746" stroke="#444746" stroke-width="0.600"><path d="M12 22C6.490 22 2 17.510 2 12S6.490 2 12 2s10 4.040 10 9c0 3.310-2.690 6-6 6h-1.770c-.28 0-.5.220-.5.500 0 .12.050.23.130.33.410.47.640 1.060.640 1.670A2.500 2.500 0 0 1 12 22zm0-18c-4.410 0-8 3.590-8 8s3.590 8 8 8c.28 0 .5-.22.500-.5a.54.540 0 0 0-.14-.35c-.41-.46-.63-1.050-.63-1.650a2.500 2.500 0 0 1 2.500-2.500H16c2.210 0 4-1.790 4-4 0-3.860-3.590-7-8-7z"/><circle cx="6.500" cy="11.500" r="1.500"/><circle cx="9.500" cy="7.500" r="1.500"/><circle cx="14.500" cy="7.500" r="1.500"/><circle cx="17.500" cy="11.500" r="1.500"/></svg>
<div class="mi" style="top:328.1px;letter-spacing:-0.300px">Add to theme</div>
<div class="arr" style="top:330.2px"></div>
<div class="ms" style="top:108.8px"></div>
<div class="ms" style="top:139.9px"></div>
<div class="ms" style="top:191.5px"></div>
<div class="ms" style="top:254.1px"></div>
<div class="ms" style="top:285.5px"></div>
<div class="ms" style="top:316.8px"></div>
</div></div>
<div class="a" style="left:507px;top:280.300px;width:201.300px;height:25.200px;border:2px solid #ea3f35;border-radius:2.500px"></div>

<!-- side panel -->
<div class="a" style="left:759px;top:180.500px;width:31px;height:66.500px;border-radius:15.500px;background:#eef1f7"></div>
<div class="a" style="left:759px;top:249.500px;width:31px;height:66.500px;border-radius:15.500px;background:#eef1f7"></div>
<svg style="left:768.400px;top:193.600px" width="13" height="13" viewBox="0 0 24 24" stroke="#444746" stroke-width="0.400"><path d="M18 13v7H4V6h5.020c.05-.71.220-1.380.480-2H4c-1.100 0-2 .9-2 2v14c0 1.100.9 2 2 2h14c1.100 0 2-.9 2-2v-5l-2-2zm-1.500 5h-11l2.750-3.530 1.960 2.360 2.750-3.540L16.500 18zm2.800-9.110c.44-.7.700-1.510.700-2.390C20 4.010 17.990 2 15.500 2S11 4.010 11 6.500s2.010 4.500 4.490 4.500c.88 0 1.700-.26 2.390-.70L21 13.420 22.420 12 19.300 8.890zM15.500 9a2.500 2.500 0 0 1 0-5 2.500 2.500 0 0 1 0 5z" fill="#444746"/></svg>
<svg style="left:768px;top:221.500px" width="13" height="13" viewBox="0 0 24 24" stroke="#444746" stroke-width="0.400"><path d="M9.170 6l2 2H20v10H4V6h5.170M10 4H4c-1.100 0-1.990.9-1.990 2L2 18c0 1.100.9 2 2 2h16c1.100 0 2-.9 2-2V8c0-1.100-.9-2-2-2h-8l-2-2z" fill="#444746"/></svg>
<svg style="left:768px;top:262.500px" width="13" height="13" viewBox="0 0 24 24"><path d="M19 3H5c-1.100 0-2 .9-2 2v14c0 1.100.9 2 2 2h14c1.100 0 2-.9 2-2V5c0-1.100-.9-2-2-2zm0 16H5V5h14v14zM9.500 7.500v9l7-4.500z" fill="#444746"/><path d="M11.300 10.700v2.600l2.100-1.300z" fill="#edf1f7"/></svg>
<svg style="left:768px;top:290.900px" width="13" height="13" viewBox="0 0 24 24"><circle cx="12" cy="12" r="9" fill="none" stroke="#b4b8bd" stroke-width="2"/><circle cx="12" cy="12" r="5" fill="#b4b8bd"/></svg>
<div class="a" style="left:785px;top:400.500px;width:26px;height:26px;border-radius:13px;background:#fff;box-shadow:0 1px 2px rgba(60,64,67,.3),0 1px 3px 1px rgba(60,64,67,.15)"></div>
<svg style="left:791px;top:410px" width="5" height="8" viewBox="0 0 5 8"><path d="M4.200 0.600L0.900 4L4.200 7.400" fill="none" stroke="#444746" stroke-width="1.300"/></svg>
<div class="a" style="left:-4px;top:428px;width:8px;height:8px;border-radius:4px;background:#1f4e59"></div>
<div class="a" style="left:795px;top:429.500px;width:8px;height:8px;border-radius:4px;background:#1f4e59"></div>

</body></html>
